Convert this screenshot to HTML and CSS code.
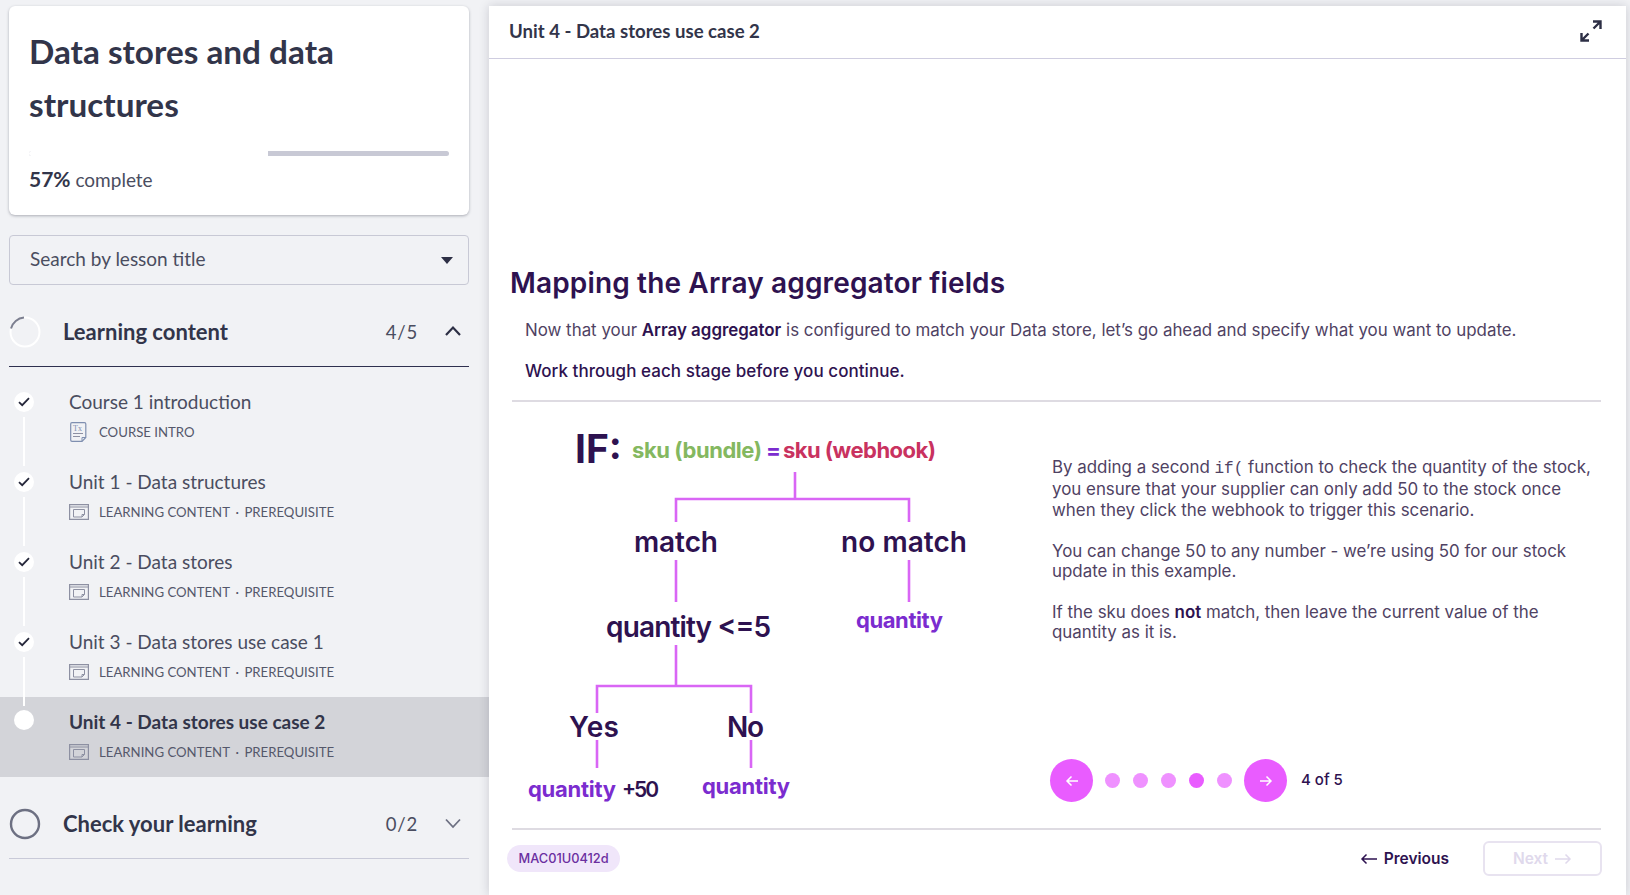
FILE: index.html
```html
<!DOCTYPE html>
<html lang="en">
<head>
<meta charset="utf-8">
<title>Data stores and data structures</title>
<link rel="stylesheet" href="styles.css">
</head>
<body>
<aside class="sidebar">
  <section class="card">
    <h1 class="card-title">Data stores and data structures</h1>
    <div class="progress"><div class="progress-fill" style="width:57%"></div></div>
    <p class="progress-label"><strong>57%</strong> complete</p>
  </section>
  <div class="select"><span>Search by lesson title</span><i class="caret"></i></div>

  <header class="sec-head open">
    <svg class="ring" width="32" height="32" viewBox="0 0 32 32"><circle cx="16" cy="16" r="14.5" fill="none" stroke="#fff" stroke-width="2"/><path d="M2 12.5A14.5 14.5 0 0 1 15 1.5" fill="none" stroke="#7c7f90" stroke-width="2"/></svg>
    <h2 class="sec-title">Learning content</h2>
    <span class="sec-count">4/5</span>
    <svg class="chev" width="18" height="12" viewBox="0 0 18 12"><path d="M2 10l7-7.5 7 7.5" fill="none" stroke="#2d2f45" stroke-width="2.2"/></svg>
  </header>

  <ul class="lessons">
    <li class="lesson">
      <div class="gutter"><span class="dot"><svg width="12" height="10" viewBox="0 0 12 10"><path d="M1 5.2l3.2 3L11 1.2" fill="none" stroke="#25273a" stroke-width="1.8"/></svg></span><span class="link"></span></div>
      <div class="lesson-body">
        <div class="lesson-title">Course 1 introduction</div>
        <div class="lesson-meta"><svg class="ico" width="20" height="20" viewBox="0 0 20 20"><path d="M3 .7h12.500q1.300 0 1.300 1.300v13.500L13 19.300H3q-1.300 0-1.300-1.300V2Q1.700.7 3 .7z" fill="none" stroke="#7f8fb0" stroke-width="1.200"/><path d="M13 19.300v-3.800h3.800" fill="none" stroke="#7f8fb0" stroke-width="1"/><path d="M4 11.500h10M4 14.500h7" stroke="#8d90a2" stroke-width="1"/><text class="ico-tx" x="4" y="8.500">Tx</text></svg><span>COURSE INTRO</span></div>
      </div>
    </li>
    <li class="lesson">
      <div class="gutter"><span class="dot"><svg width="12" height="10" viewBox="0 0 12 10"><path d="M1 5.2l3.2 3L11 1.2" fill="none" stroke="#25273a" stroke-width="1.8"/></svg></span><span class="link"></span></div>
      <div class="lesson-body">
        <div class="lesson-title">Unit 1 - Data structures</div>
        <div class="lesson-meta"><svg class="ico" width="20" height="16" viewBox="0 0 20 16"><path d="M.6.6h18.800v14.800H.6zM.6 3h18.800" fill="none" stroke="#8d90a2" stroke-width="1.200"/><path d="M4.500 5.500h11v5l-2.500 2.500h-8.500zM15.500 10.500H13V13" fill="none" stroke="#8d90a2" stroke-width="1"/></svg><span>LEARNING CONTENT</span><span class="sep">·</span><span>PREREQUISITE</span></div>
      </div>
    </li>
    <li class="lesson">
      <div class="gutter"><span class="dot"><svg width="12" height="10" viewBox="0 0 12 10"><path d="M1 5.2l3.2 3L11 1.2" fill="none" stroke="#25273a" stroke-width="1.8"/></svg></span><span class="link"></span></div>
      <div class="lesson-body">
        <div class="lesson-title">Unit 2 - Data stores</div>
        <div class="lesson-meta"><svg class="ico" width="20" height="16" viewBox="0 0 20 16"><path d="M.6.6h18.800v14.800H.6zM.6 3h18.800" fill="none" stroke="#8d90a2" stroke-width="1.200"/><path d="M4.500 5.500h11v5l-2.500 2.500h-8.500zM15.500 10.500H13V13" fill="none" stroke="#8d90a2" stroke-width="1"/></svg><span>LEARNING CONTENT</span><span class="sep">·</span><span>PREREQUISITE</span></div>
      </div>
    </li>
    <li class="lesson">
      <div class="gutter"><span class="dot"><svg width="12" height="10" viewBox="0 0 12 10"><path d="M1 5.2l3.2 3L11 1.2" fill="none" stroke="#25273a" stroke-width="1.8"/></svg></span><span class="link"></span></div>
      <div class="lesson-body">
        <div class="lesson-title">Unit 3 - Data stores use case 1</div>
        <div class="lesson-meta"><svg class="ico" width="20" height="16" viewBox="0 0 20 16"><path d="M.6.6h18.800v14.800H.6zM.6 3h18.800" fill="none" stroke="#8d90a2" stroke-width="1.200"/><path d="M4.500 5.500h11v5l-2.500 2.500h-8.500zM15.500 10.500H13V13" fill="none" stroke="#8d90a2" stroke-width="1"/></svg><span>LEARNING CONTENT</span><span class="sep">·</span><span>PREREQUISITE</span></div>
      </div>
    </li>
    <li class="lesson active">
      <div class="gutter"><span class="dot"></span></div>
      <div class="lesson-body">
        <div class="lesson-title">Unit 4 - Data stores use case 2</div>
        <div class="lesson-meta"><svg class="ico" width="20" height="16" viewBox="0 0 20 16"><path d="M.6.6h18.800v14.800H.6zM.6 3h18.800" fill="none" stroke="#8d90a2" stroke-width="1.200"/><path d="M4.500 5.500h11v5l-2.500 2.500h-8.500zM15.500 10.500H13V13" fill="none" stroke="#8d90a2" stroke-width="1"/></svg><span>LEARNING CONTENT</span><span class="sep">·</span><span>PREREQUISITE</span></div>
      </div>
    </li>
  </ul>

  <header class="sec-head closed">
    <svg class="ring" width="32" height="32" viewBox="0 0 32 32"><circle cx="16" cy="16" r="14" fill="none" stroke="#6d7082" stroke-width="2.400"/></svg>
    <h2 class="sec-title">Check your learning</h2>
    <span class="sec-count">0/2</span>
    <svg class="chev" width="18" height="12" viewBox="0 0 18 12"><path d="M2 2.500l7 7.500 7-7.500" fill="none" stroke="#6d7082" stroke-width="1.800"/></svg>
  </header>
</aside>

<main class="main">
  <header class="main-head">
    <span class="main-head-title">Unit 4 - Data stores use case 2</span>
    <svg width="22" height="22" viewBox="0 0 22 22"><path d="M13 1.500h7.500V9M20 2l-6.500 6.500M9 20.500H1.500V13M2 20l6.500-6.500" fill="none" stroke="#2d2f45" stroke-width="2.400"/></svg>
  </header>

  <div class="content">
    <h2 class="heading">Mapping the Array aggregator fields</h2>
    <p class="intro">Now that your <strong>Array aggregator</strong> is configured to match your Data store, let’s go ahead and specify what you want to update.</p>
    <p class="intro dark">Work through each stage before you continue.</p>

    <div class="stage">
      <svg class="tree" width="500" height="427" viewBox="512 402 500 427">
        <g class="wire">
          <path d="M795 472V499M676 522V499H909V522M676 560V602M909 560V602M676 645V686M597 713V686H751V713M597 740V768M751 740V768"/>
        </g>
        <text class="t-if" x="575" y="463">IF:</text>
        <text class="t-sku green" x="632" y="458" textLength="130">sku (bundle)</text>
        <text class="t-sku violet" x="766" y="458">=</text>
        <text class="t-sku red" x="783" y="458" textLength="153">sku (webhook)</text>
        <text class="t-big" x="634" y="552" textLength="84">match</text>
        <text class="t-big" x="841" y="552" textLength="126">no match</text>
        <text class="t-big" x="606" y="637" textLength="165">quantity &lt;=5</text>
        <text class="t-sku violet" x="856" y="628" textLength="87">quantity</text>
        <text class="t-big" x="569" y="737" textLength="50">Yes</text>
        <text class="t-big" x="727" y="737" textLength="37">No</text>
        <text class="t-sku violet" x="528" y="797" textLength="88">quantity</text>
        <text class="t-plus ink" x="622" y="797" textLength="37">+50</text>
        <text class="t-sku violet" x="702" y="794" textLength="88">quantity</text>
      </svg>
      <div class="aside">
        <p>By adding a second <code>if(</code> function to check the quantity of the stock, you ensure that your supplier can only add 50 to the stock once when they click the webhook to trigger this scenario.</p>
        <p>You can change 50 to any number - we’re using 50 for our stock update in this example.</p>
        <p>If the sku does <strong>not</strong> match, then leave the current value of the quantity as it is.</p>
        <div class="stepper">
          <button class="round"><svg width="14" height="12" viewBox="0 0 14 12"><path d="M13 6H2M6.500 1.500L2 6l4.500 4.500" fill="none" stroke="#fff" stroke-width="1.500"/></svg></button>
          <div class="pips"><i></i><i></i><i></i><i class="on"></i><i></i></div>
          <button class="round"><svg width="14" height="12" viewBox="0 0 14 12"><path d="M1 6h11M7.500 1.500L12 6l-4.500 4.500" fill="none" stroke="#fff" stroke-width="1.500"/></svg></button>
          <span class="step-label">4 of 5</span>
        </div>
      </div>
    </div>

    <footer class="foot">
      <span class="chip">MAC01U0412d</span>
      <div class="nav">
        <button class="prev"><svg width="18" height="12" viewBox="0 0 18 12"><path d="M17 6H2M6.500 1.500L2 6l4.500 4.500" fill="none" stroke="#2e1250" stroke-width="1.500"/></svg>Previous</button>
        <button class="next">Next<svg width="18" height="12" viewBox="0 0 18 12"><path d="M1 6h15M11.500 1.500L16 6l-4.500 4.500" fill="none" stroke="#e0d9ec" stroke-width="1.500"/></svg></button>
      </div>
    </footer>
  </div>
</main>
</body>
</html>
```
FILE: styles.css
```css
* { box-sizing: border-box; }
html, body { height: 100%; }
body {
  margin: 0;
  height: 895px;
  overflow: hidden;
  display: flex;
  background: #f1f2f5;
  font-family: "Inter", "Liberation Sans", sans-serif;
  color: #2e1250;
}
h1, h2, p, ul { margin: 0; padding: 0; }
ul { list-style: none; }

/* Sidebar */
.sidebar {
  width: 489px;
  flex: none;
  padding-top: 6px;
  font-family: "Lato", "Liberation Sans", sans-serif;
  color: #32354a;
}
.card {
  margin: 0 20px 0 9px;
  height: 209px;
  padding: 19px 20px 0 20px;
  background: #fff;
  border-radius: 6px;
  box-shadow: 0 1px 3px rgba(40, 42, 60, .35);
}
.card-title { font-size: 33.300px; line-height: 53px; font-weight: 700; color: #32354a; }
.progress { height: 5px; margin: 20px 0 0; background: #c8c9d5; border-radius: 3px; overflow: hidden; }
.progress-fill { height: 100%; background: #fff; }
.progress-label { margin-top: 10px; font-size: 19px; line-height: 26px; color: #4a4d60; }
.progress-label strong { font-size: 21px; font-weight: 700; color: #32354a; }

.select {
  margin: 20px 20px 0 9px;
  height: 50px;
  padding: 0 15px 3px 20px;
  display: flex;
  align-items: center;
  justify-content: space-between;
  border: 1px solid #c8c9d5;
  border-radius: 4px;
  font-size: 19px;
  color: #4a4d60;
}
.caret { width: 0; height: 0; margin-top: 3px; border: 6px solid transparent; border-top: 7px solid #2d2f45; border-bottom: 0; }

.sec-head {
  margin: 0 20px 0 9px;
  height: 82px;
  padding-top: 12px;
  display: flex;
  align-items: center;
  border-bottom: 1px solid #c9cad8;
}
.sec-head.open { border-bottom-color: #2f304f; }
.ring { flex: none; }
.sec-title { margin: 0 0 1px 22px; flex: 1; font-size: 22px; font-weight: 700; color: #32354a; }
.sec-count { font-size: 18.500px; letter-spacing: .8px; color: #4a4d60; margin-right: 26px; }
.chev { flex: none; margin: 0 7px 1px 0; }

.lessons { margin-top: 10px; }
.lesson { height: 80px; display: flex; }
.lesson.active { background: #d3d4d9; }
.gutter { position: relative; width: 48px; flex: none; padding-top: 15px; display: flex; flex-direction: column; align-items: center; height: 80px; }
.active .gutter { padding-top: 13px; }
.dot { width: 20px; height: 20px; flex: none; border-radius: 50%; background: #fff; display: flex; align-items: center; justify-content: center; }
.link { flex: none; width: 2px; height: 49px; margin-top: 5px; background: #fff; }
.lesson-body { margin-left: 21px; padding-top: 12px; }
.lesson-title { font-size: 19px; line-height: 26px; color: #4a4d60; }
.active .lesson-title { font-weight: 700; color: #32354a; }
.lesson-meta { margin-top: 7px; height: 20px; display: flex; align-items: center; font-size: 13.200px; color: #55586b; }
.ico { flex: none; margin-right: 10px; }
.ico-tx { font-family: "Liberation Serif", serif; font-size: 8px; fill: #7f8fb0; }
.sep { margin: 0 5.500px; }

/* Main */
.main {
  flex: 1;
  margin: 6px 4px 0 0;
  display: flex;
  flex-direction: column;
  background: #fff;
  box-shadow: 0 0 10px rgba(30, 30, 50, .18);
  min-width: 0;
}
.main-head {
  height: 53px;
  flex: none;
  padding: 0 24px 2px 20px;
  display: flex;
  align-items: center;
  justify-content: space-between;
  border-bottom: 1px solid #cfcde0;
}
.main-head-title { font-family: "Lato", "Liberation Sans", sans-serif; font-size: 18.600px; font-weight: 700; color: #32354a; }
.content { flex: 1; padding: 207px 25px 0 21px; display: flex; flex-direction: column; min-height: 0; }
.heading { font-size: 28px; line-height: 34px; font-weight: 600; color: #2e1250; letter-spacing: .15px; }
.intro { margin: 18px 0 0 15px; font-size: 16.900px; line-height: 24px; color: #4f4263; }
.intro.dark { margin-top: 17px; color: #2e1250; font-weight: 500; font-size: 17px; letter-spacing: .05px; }
.intro strong { color: #2e1250; font-weight: 600; }

.stage { margin: 17px 0 0 2px; height: 430px; display: flex; border-top: 2px solid #dedbe2; border-bottom: 2px solid #dedbe2; }
.tree { flex: none; display: block; }
.wire path { fill: none; stroke: #d966f5; stroke-width: 2.600; }
.tree text { font-family: "Inter", sans-serif; font-weight: 600; }
.t-if { font-size: 39px; fill: #2e1250; }
.tree .t-if { font-weight: 700; }
.t-sku { font-size: 22px; }
.tree .t-sku { font-weight: 700; }
.t-plus { font-size: 21px; }
.t-big { font-size: 28px; fill: #2e1250; }
.green { fill: #84b860; }
.violet { fill: #7b2ccf; }
.red { fill: #c9325f; }
.ink { fill: #2e1250; }

.aside { flex: 1; padding: 55px 0 0 40px; font-size: 16.900px; line-height: 20.400px; color: #4f4263; display: flex; flex-direction: column; }
.aside p { margin-bottom: 20.500px; }
.aside strong { color: #2e1250; font-weight: 600; }
.aside code { font-family: "Liberation Mono", monospace; font-size: 16px; }
.stepper { margin-top: auto; margin-bottom: 26px; display: flex; align-items: center; color: #2e1250; margin-left: -2px; }
.round { width: 43px; height: 43px; padding: 0; border: 0; border-radius: 50%; background: #e95cff; display: flex; align-items: center; justify-content: center; flex: none; }
.pips { display: flex; gap: 13px; margin: 0 12px; }
.pips i { width: 15px; height: 15px; border-radius: 50%; background: #ef91ff; display: block; }
.pips i.on { background: #e95cff; }
.step-label { margin-left: 14px; font-size: 15px; font-weight: 500; }

.foot { flex: none; display: flex; align-items: center; justify-content: space-between; padding-top: 11px; margin-left: -3px; margin-right: -1px; }
.chip { height: 27px; padding: 0 11.500px; display: flex; align-items: center; border-radius: 14px; background: #f0e6fa; font-size: 12.800px; font-weight: 500; color: #6b2fa0; }
.nav { display: flex; align-items: center; gap: 34px; }
.prev, .next { font-family: "Inter", sans-serif; font-size: 15.500px; font-weight: 600; background: none; display: flex; align-items: center; gap: 6px; padding: 0; }
.prev { border: 0; color: #2e1250; }
.next { width: 119px; height: 35px; justify-content: center; border: 2px solid #e8e3f0; border-radius: 6px; color: #e0d9ec; }
```
